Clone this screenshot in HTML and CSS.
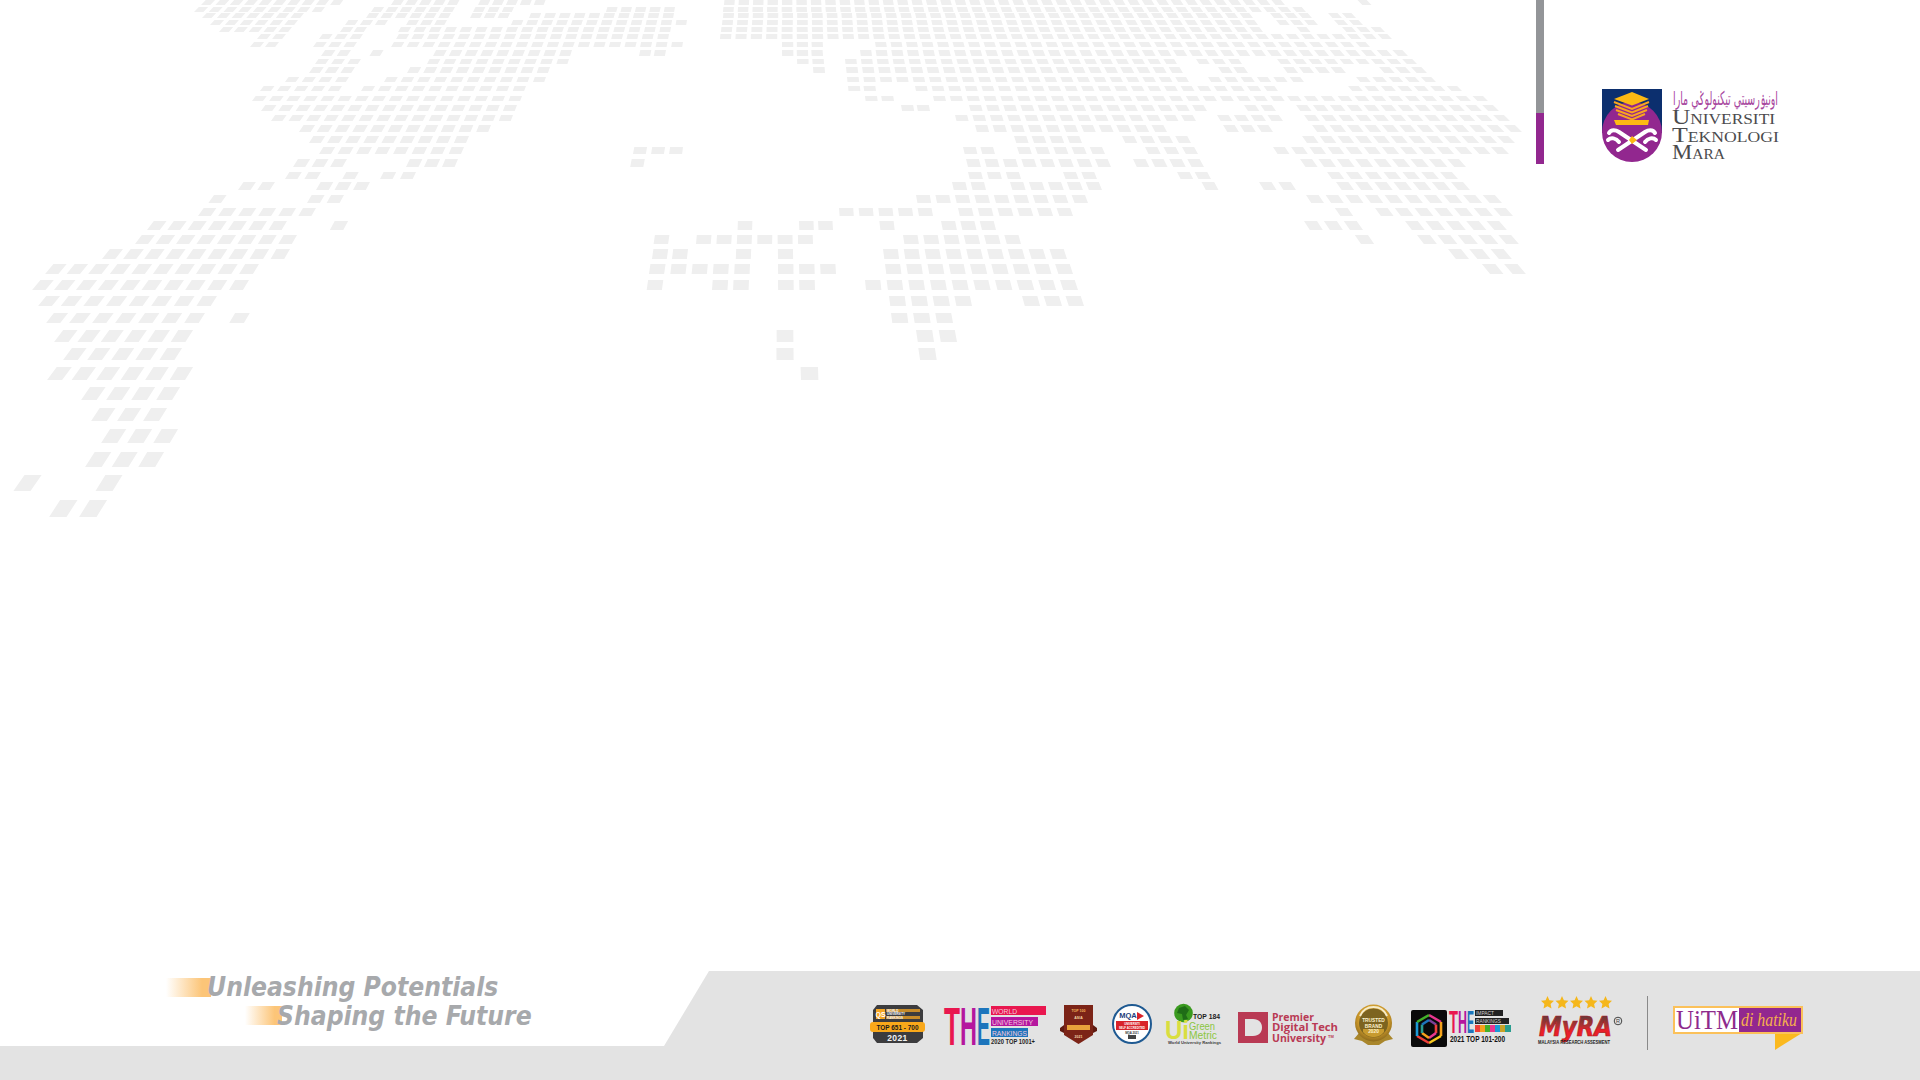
FILE: index.html
```html
<!DOCTYPE html>
<html lang="en">
<head>
<meta charset="utf-8">
<title>UiTM slide</title>
<link rel="stylesheet" href="styles.css">
</head>
<body>
<main class="slide">
  <svg class="map" viewBox="0 0 1920 1080" aria-hidden="true"><path id="map-dots" class="map-dots"/></svg>

  <header class="top">
    <div class="accent"><span class="accent-grey"></span><span class="accent-purple"></span></div>
    <svg class="uitm-logo" viewBox="0 0 180 76" role="img" aria-label="Universiti Teknologi Mara">
      <rect x="0" y="0" width="60" height="44" fill="#0c2f6e"/>
      <circle cx="30" cy="43" r="30" fill="#92278f"/>
      <path d="M30 3 47 10 30 16.500 12 10Z" fill="#fdb913"/>
      <path d="M12 13 30 20 47 13M13 17 30 23.500 46 17M14 21 30 27 45 21M16 25 30 30.500 43 25" fill="none" stroke="#f9a51f" stroke-width="2"/>
      <path d="M12 31H47L46 36H14Z" fill="#fdb913"/>
      <path d="M7 44C9 40 14 41 17 43L44 61M53 44C51 40 46 41 43 43L16 61M6 51C9 48 14 49 17 53M54 51C51 48 46 49 43 53" fill="none" stroke="#fff" stroke-width="4" stroke-linecap="round"/>
      <path d="M30 47 35 51 30 55 27 51Z" fill="#fdb913"/>
      <text class="jawi" x="71" y="16" textLength="105" lengthAdjust="spacingAndGlyphs">اونيۏرسيتي تيکنولوݢي مارا</text>
      <text class="logo-word" x="70" y="35" textLength="103" lengthAdjust="spacingAndGlyphs">Universiti</text>
      <text class="logo-word" x="70" y="52.500" textLength="107" lengthAdjust="spacingAndGlyphs">Teknologi</text>
      <text class="logo-word" x="70" y="70" textLength="53" lengthAdjust="spacingAndGlyphs">Mara</text>
    </svg>
  </header>

  <footer class="foot">
    <div class="tagline">
      <p class="tag tag-one"><span class="tag-bar tag-bar-one"></span><span class="tag-text">Unleashing Potentials</span></p>
      <p class="tag tag-two"><span class="tag-bar tag-bar-two"></span><span class="tag-text">Shaping the Future</span></p>
    </div>
    <div class="logos">
      <svg class="lg lg-qs" width="55" height="56" viewBox="0 0 55 56" role="img" aria-label="QS World University Rankings">
        <path d="M7 10H47L53 15V43L47 48H7L3 43V15Z" fill="#3c3c3e"/>
        <rect x="6" y="14" width="9" height="10" fill="#f5a623"/>
        <text class="t-qs-q" x="10.500" y="21.500">QS</text>
        <rect x="16" y="14" width="34" height="3" fill="#f5a623" opacity=".75"/>
        <rect x="16" y="21" width="34" height="3" fill="#f5a623" opacity=".75"/>
        <text class="t-qs-s" x="17" y="17">WORLD</text>
        <text class="t-qs-s" x="17" y="20.300">UNIVERSITY</text>
        <text class="t-qs-s" x="17" y="23.600">RANKINGS</text>
        <rect x="0" y="27" width="55" height="10" rx="3" fill="#f9a81a"/>
        <text class="t-qs-top" x="27.500" y="34.500" textLength="42" lengthAdjust="spacingAndGlyphs">TOP 651 - 700</text>
        <text class="t-qs-yr" x="27.500" y="46">2021</text>
      </svg>
      <svg class="lg lg-the" width="102" height="56" viewBox="0 0 102 56" role="img" aria-label="THE World University Rankings">
        <text class="t-the t-red" x="0" y="50" textLength="16" lengthAdjust="spacingAndGlyphs">T</text>
        <text class="t-the t-mag" x="16" y="50" textLength="17" lengthAdjust="spacingAndGlyphs">H</text>
        <text class="t-the t-blu" x="33" y="50" textLength="13" lengthAdjust="spacingAndGlyphs">E</text>
        <rect x="47" y="11" width="55" height="9" fill="#e9174f"/>
        <text class="t-the-s" x="48" y="18.500" textLength="25" lengthAdjust="spacingAndGlyphs">WORLD</text>
        <rect x="47" y="22" width="47" height="9" fill="#b5179e"/>
        <text class="t-the-s" x="48" y="29.500" textLength="41" lengthAdjust="spacingAndGlyphs">UNIVERSITY</text>
        <rect x="47" y="33" width="37" height="9" fill="#1c75bc"/>
        <text class="t-the-s" x="48" y="40.500" textLength="35" lengthAdjust="spacingAndGlyphs">RANKINGS</text>
        <text class="t-the-y" x="47" y="49" textLength="44" lengthAdjust="spacingAndGlyphs">2020 TOP 1001+</text>
      </svg>
      <svg class="lg lg-asia" width="37" height="56" viewBox="0 0 37 56" role="img" aria-label="Top 100 Asia">
        <path d="M4 10H33V40L18.500 49 4 40Z" fill="#7c2417"/>
        <path d="M0 33 4 30V38L0 36ZM37 33 33 30V38L37 36Z" fill="#5f1a10"/>
        <text class="t-asia t-asia-o" x="18.500" y="17">TOP 100</text>
        <text class="t-asia" x="18.500" y="24">ASIA</text>
        <rect x="7" y="30" width="23" height="5" fill="#e8a33b"/>
        <text class="t-asia" x="18.500" y="43">2021</text>
      </svg>
      <svg class="lg lg-moa" width="40" height="56" viewBox="0 0 40 56" role="img" aria-label="MQA self accreditation">
        <circle cx="20" cy="29" r="19" fill="#fff" stroke="#1f5a92" stroke-width="2"/>
        <text class="t-mqa" x="16" y="23">MQA</text>
        <path d="M25 17 32 21 25 25Z" fill="#d8232a"/>
        <rect x="4" y="26" width="32" height="9" fill="#d8232a"/>
        <text class="t-moa-s" x="20" y="30">UNIVERSITI</text>
        <text class="t-moa-s" x="20" y="33.500">SELF ACCREDITED</text>
        <text class="t-moa-d" x="20" y="39">MQA 2021</text>
        <rect x="16" y="40" width="8" height="4" fill="#444"/>
      </svg>
      <svg class="lg lg-green" width="55" height="56" viewBox="0 0 55 56" role="img" aria-label="UI GreenMetric top 184">
        <circle cx="17.500" cy="18" r="9.300" fill="#3a9a1f"/>
        <path d="M13 13 19 11 23 15 20 20 22 24 17 25 16 19 11 18Z" fill="#1f6d17"/>
        <text class="t-gr-top" x="27" y="24" textLength="27" lengthAdjust="spacingAndGlyphs">TOP 184</text>
        <text class="t-gr-ui" x="-1" y="44" textLength="24" lengthAdjust="spacingAndGlyphs">Ui</text>
        <text class="t-gr-g" x="23" y="34.500" textLength="26" lengthAdjust="spacingAndGlyphs">Green</text>
        <text class="t-gr-g" x="23" y="43.500" textLength="28" lengthAdjust="spacingAndGlyphs">Metric</text>
        <text class="t-gr-w" x="2" y="49" textLength="53" lengthAdjust="spacingAndGlyphs">World University Rankings</text>
      </svg>
      <svg class="lg lg-pdt" width="100" height="56" viewBox="0 0 100 56" role="img" aria-label="Premier Digital Tech University">
        <path d="M0 17H30V48H0ZM7 24V41H15C21 41 24 37 24 32.500 24 28 21 24 15 24Z" fill="#b93a54" fill-rule="evenodd"/>
        <text class="t-pdt" x="34" y="26" textLength="42" lengthAdjust="spacingAndGlyphs">Premier</text>
        <text class="t-pdt" x="34" y="36" textLength="66" lengthAdjust="spacingAndGlyphs">Digital Tech</text>
        <text class="t-pdt" x="34" y="46.500" textLength="54" lengthAdjust="spacingAndGlyphs">University</text>
        <text class="t-pdt-tm" x="90" y="42.500">TM</text>
      </svg>
      <svg class="lg lg-trust" width="39" height="56" viewBox="0 0 39 56" role="img" aria-label="Trusted Brand 2020">
        <defs><radialGradient id="gold" cx=".5" cy=".4" r=".6"><stop offset="0" stop-color="#f7d774"/><stop offset=".7" stop-color="#c9962a"/><stop offset="1" stop-color="#8c6a1c"/></radialGradient></defs>
        <path d="M5 38 0 44 8 46 14 50H25L31 46 39 44 34 38Z" fill="#a9862b"/>
        <circle cx="19.500" cy="28" r="18.500" fill="url(#gold)"/>
        <circle cx="19.500" cy="28" r="14.500" fill="#7d6420"/>
        <path d="M6 21C9 14 14 12 19.500 12 25 12 30 14 33 21" fill="none" stroke="#f6ecc9" stroke-width="2"/>
        <path d="M9 37C12 41 16 42 19.500 42 23 42 27 41 30 37V34H9Z" fill="#c79a2e"/>
        <text class="t-tr" x="19.500" y="27">TRUSTED</text>
        <text class="t-tr" x="19.500" y="32.500">BRAND</text>
        <text class="t-tr" x="19.500" y="38">2020</text>
      </svg>
      <svg class="lg lg-impact" width="104" height="56" viewBox="0 0 104 56" role="img" aria-label="THE Impact Rankings 2021 top 101-200">
        <rect x="0" y="15" width="36" height="37" rx="2" fill="#0a0a0a"/>
        <g fill="none" stroke-width="2.600">
          <path d="M18 20 30 27" stroke="#e9368f"/><path d="M30 27V41" stroke="#f5a11c"/><path d="M30 41 18 48" stroke="#f7c81e"/>
          <path d="M18 48 6 41" stroke="#ef3f3a"/><path d="M6 41V27" stroke="#1c9ad6"/><path d="M6 27 18 20" stroke="#43b02a"/>
          <path d="M18 25 25 29.500" stroke="#7d3f98"/><path d="M25 29.500V38" stroke="#ef3f3a"/><path d="M25 38 18 43" stroke="#e9368f"/>
          <path d="M18 43 11 38" stroke="#f5a11c"/><path d="M11 38V29.500" stroke="#2a9d8f"/><path d="M11 29.500 18 25" stroke="#1c75bc"/>
        </g>
        <text class="t-the-b t-red" x="38" y="38" textLength="9" lengthAdjust="spacingAndGlyphs">T</text>
        <text class="t-the-b t-mag" x="47" y="38" textLength="9" lengthAdjust="spacingAndGlyphs">H</text>
        <text class="t-the-b t-blu" x="56" y="38" textLength="7" lengthAdjust="spacingAndGlyphs">E</text>
        <rect x="64" y="15" width="28" height="6" fill="#222"/>
        <text class="t-imp" x="65" y="20" textLength="18" lengthAdjust="spacingAndGlyphs">IMPACT</text>
        <rect x="64" y="23" width="34" height="6" fill="#222"/>
        <text class="t-imp" x="65" y="28" textLength="25" lengthAdjust="spacingAndGlyphs">RANKINGS</text>
        <rect x="64" y="30" width="5" height="7" fill="#ef3f3a"/><rect x="69" y="30" width="5" height="7" fill="#f5a11c"/>
        <rect x="74" y="30" width="5" height="7" fill="#43b02a"/><rect x="79" y="30" width="5" height="7" fill="#e9368f"/>
        <rect x="84" y="30" width="5" height="7" fill="#1c9ad6"/><rect x="89" y="30" width="5" height="7" fill="#c9a227"/>
        <rect x="94" y="30" width="6" height="7" fill="#2a9d8f"/>
        <text class="t-imp-y" x="39" y="46.500" textLength="55" lengthAdjust="spacingAndGlyphs">2021 TOP 101-200</text>
      </svg>
      <svg class="lg lg-myra" width="85" height="56" viewBox="0 0 85 56" role="img" aria-label="MyRA Malaysia Research Assesment five stars">
        <defs>
          <path id="star" d="M6.500 0 8.400 4.300 13 4.800 9.600 7.900 10.500 12.500 6.500 10.200 2.500 12.500 3.400 7.900 0 4.800 4.600 4.300Z" fill="#f5b71b"/>
          <linearGradient id="myra-fill" x1="0" y1="0" x2="0" y2="1"><stop offset="0" stop-color="#4a3a3a"/><stop offset=".45" stop-color="#a33"/><stop offset=".6" stop-color="#e8202a"/><stop offset="1" stop-color="#f01c24"/></linearGradient>
        </defs>
        <use href="#star" x="3" y="1"/><use href="#star" x="17.500" y="1"/><use href="#star" x="32" y="1"/><use href="#star" x="46.500" y="1"/><use href="#star" x="61" y="1"/>
        <text class="t-myra" x="1" y="41" textLength="73" lengthAdjust="spacingAndGlyphs">MyRA</text>
        <circle cx="80" cy="26" r="3.800" fill="none" stroke="#444" stroke-width="1"/>
        <text class="t-reg" x="80" y="28">R</text>
        <text class="t-myra-s" x="0" y="49" textLength="72" lengthAdjust="spacingAndGlyphs">MALAYSIA RESEARCH ASSESMENT</text>
      </svg>
      <span class="sep"></span>
      <svg class="lg lg-hati" width="130" height="56" viewBox="0 0 130 56" role="img" aria-label="UiTM di hatiku">
        <path d="M102 38H129L102 55Z" fill="#fbb91f"/>
        <rect x="1" y="12" width="128" height="26" fill="#fff" stroke="#fbc15a" stroke-width="2"/>
        <rect x="66" y="13" width="62" height="24" fill="#92278f"/>
        <text class="t-hati-u" x="3" y="34" textLength="62" lengthAdjust="spacingAndGlyphs">UiTM</text>
        <text class="t-hati-d" x="68" y="31" textLength="56" lengthAdjust="spacingAndGlyphs">di hatiku</text>
      </svg>
    </div>
  </footer>
</main>
<script src="map.js"></script>
</body>
</html>
```

FILE: styles.css
```css
* { box-sizing: border-box; }
html, body { margin: 0; height: 100%; background: #fff; }
.slide {
  position: relative;
  width: 1920px;
  height: 1080px;
  overflow: hidden;
  display: flex;
  flex-direction: column;
  justify-content: space-between;
  background: #fff;
  font-family: "Liberation Sans", Arial, sans-serif;
}
.map { position: absolute; inset: 0; width: 1920px; height: 1080px; }
.map-dots { fill: #efefef; }

/* header */
.top {
  position: relative;
  display: flex;
  justify-content: flex-end;
  align-items: flex-start;
  gap: 58px;
  padding-right: 138px;
}
.accent { display: flex; flex-direction: column; width: 8px; }
.accent-grey { height: 113px; background: #939598; }
.accent-purple { height: 51px; background: #92278f; }
.uitm-logo { width: 180px; height: 76px; margin-top: 89px; overflow: visible; }
.jawi { font-family: "DejaVu Sans", sans-serif; font-size: 19px; fill: #a8489f; }
.logo-word {
  font-family: "Liberation Serif", serif;
  font-size: 20.5px;
  font-variant: small-caps;
  fill: #4b4b4d;
}

/* footer */
.foot {
  position: relative;
  display: flex;
  height: 109px;
  background: linear-gradient(#e3e3e3, #e3e3e3) left bottom / 100% 34px no-repeat;
}
.tagline { width: 664px; flex: none; padding-top: 2px; }
.tag { display: flex; align-items: center; height: 28.5px; margin: 0; }
.tag-one { padding-left: 166px; }
.tag-two { padding-left: 245px; }
.tag-bar { flex: none; height: 19px; background: linear-gradient(90deg, rgba(252, 197, 120, 0), #fcc578 80%); }
.tag-bar-one { width: 45px; margin-right: -4px; }
.tag-bar-two { width: 37px; margin-right: -5px; }
.tag-text {
  position: relative;
  font-family: "DejaVu Sans", sans-serif;
  font-stretch: condensed;
  font-style: italic;
  font-weight: 700;
  font-size: 26.2px;
  line-height: 28.5px;
  white-space: nowrap;
  color: #a7a9ac;
}
.logos {
  flex: 1;
  display: flex;
  align-items: flex-start;
  padding: 24px 0 0 206px;
  background: #e3e3e3;
  clip-path: polygon(45px 0, 100% 0, 100% 100%, 0 100%, 0 75px);
}
.lg { flex: none; display: block; overflow: visible; }
.lg-the { margin-left: 19px; }
.lg-asia { margin-left: 14px; }
.lg-moa { margin-left: 15px; }
.lg-green { margin-left: 14px; }
.lg-pdt { margin-left: 17px; }
.lg-trust { margin-left: 16px; }
.lg-impact { margin-left: 18px; }
.lg-myra { margin-left: 23px; }
.lg-hati { margin-left: 25px; }
.sep { flex: none; width: 1px; height: 54px; margin: 1px 0 0 24px; background: #8a8a8a; }

/* logo text */
.lg text { font-family: "Liberation Sans", Arial, sans-serif; }
.t-qs-q { font-size: 7px; font-weight: 700; fill: #fff; text-anchor: middle; }
.t-qs-s { font-size: 3px; font-weight: 700; fill: #fff; }
.t-qs-top { font-size: 7px; font-weight: 700; fill: #1a1a1a; text-anchor: middle; }
.t-qs-yr { font-size: 8.500px; font-weight: 700; fill: #f2f2f2; text-anchor: middle; letter-spacing: .4px; }
.lg text.t-the { font-family: "Liberation Sans Narrow", "Liberation Sans", sans-serif; font-size: 54px; font-weight: 700; }
.t-red { fill: #e9174f; }
.t-mag { fill: #b5179e; }
.t-blu { fill: #1c75bc; }
.t-the-s { font-size: 8px; fill: #f4c9de; }
.t-the-y { font-size: 7.800px; font-weight: 700; fill: #222; }
.t-asia { font-size: 3.500px; font-weight: 700; fill: #f4d9a8; text-anchor: middle; }
.t-asia-o { fill: #f5b95a; }
.t-mqa { font-size: 7.500px; font-weight: 700; fill: #23407c; text-anchor: middle; }
.t-moa-s { font-size: 2.800px; font-weight: 700; fill: #fff; text-anchor: middle; }
.t-moa-d { font-size: 2.800px; font-weight: 700; fill: #333; text-anchor: middle; }
.t-gr-top { font-size: 7.500px; font-weight: 700; fill: #1c1c1c; }
.t-gr-ui { font-size: 26px; font-weight: 700; fill: #d9de3f; }
.t-gr-g { font-size: 10.500px; fill: #8cc63f; }
.t-gr-w { font-size: 3.800px; font-weight: 700; fill: #3a3a3a; }
.lg text.t-pdt { font-family: "Open Sans", "Liberation Sans", sans-serif; font-size: 10.400px; font-weight: 700; fill: #b93a54; }
.t-pdt-tm { font-size: 4px; font-weight: 700; fill: #b93a54; }
.t-tr { font-size: 4.800px; font-weight: 700; fill: #fff4cf; text-anchor: middle; }
.lg text.t-the-b { font-family: "Liberation Sans Narrow", "Liberation Sans", sans-serif; font-size: 32px; font-weight: 700; }
.t-imp { font-size: 5.500px; fill: #cfcfcf; }
.t-imp-y { font-size: 9px; font-weight: 700; fill: #111; }
.lg text.t-myra { font-family: "DejaVu Sans", sans-serif; font-size: 26px; font-weight: 700; font-style: italic; fill: url(#myra-fill); stroke: #b01c24; stroke-width: .7px; }
.t-reg { font-size: 5.500px; fill: #444; text-anchor: middle; }
.t-myra-s { font-size: 4.800px; font-weight: 700; fill: #222; }
.lg text.t-hati-u { font-family: "Liberation Serif", serif; font-size: 27px; fill: #8e2a8c; }
.lg text.t-hati-d { font-family: "Liberation Serif", serif; font-size: 18px; font-style: italic; fill: #f6b04d; }
```

FILE: map.js
```js
// Dotted world map: each row is [top, bottom, pitch, [firstX, lastX, cells], ...]
var ROWS = [
[-1,5,14.5,[201,344,10],[391,460,5],[478,546,5],[724,1285,39],[1358,1370,1]],
[7,12,14.7,[194,325,9],[371,455,6],[473,514,3],[606,675,5],[723,1306,40]],
[13,18,14.9,[202,304,7],[366,451,6],[470,510,3],[529,674,10],[723,1253,36],[1270,1312,3],[1328,1356,2]],
[20,25,15,[210,298,6],[345,388,3],[406,447,3],[511,687,12],[722,1258,36],[1276,1318,3],[1334,1363,2]],
[27,32,15.2,[219,292,5],[340,367,2],[398,671,18],[721,1263,36],[1297,1310,1],[1342,1385,3]],
[34,39,15.4,[257,286,2],[319,363,3],[396,669,18],[720,1392,44]],
[42,47,15.6,[250,279,2],[313,357,3],[391,683,19],[782,823,3],[875,1370,32]],
[50,56,15.8,[321,351,2],[370,383,1],[433,572,9],[639,666,2],[782,823,3],[860,1408,35]],
[59,64,16,[315,361,3],[427,569,9],[797,824,2],[845,1177,21],[1196,1242,3],[1277,1417,9]],
[67,73,16.3,[309,355,3],[407,550,9],[813,825,1],[846,1183,21],[1218,1248,2],[1283,1346,4],[1379,1427,3]],
[77,82,16.4,[285,349,4],[384,546,10],[847,1189,21],[1208,1304,6],[1356,1436,5]],
[86,91,16.7,[260,342,5],[361,526,10],[848,876,2],[915,1278,22],[1348,1462,7]],
[96,101,17,[252,522,16],[865,894,2],[933,1488,33]],
[105,111,17.3,[261,517,15],[901,930,2],[969,1207,14],[1244,1276,2],[1296,1499,12]],
[115,121,17.5,[271,513,14],[955,1196,14],[1217,1283,4],[1304,1510,12]],
[125,132,17.7,[299,491,11],[975,1167,11],[1223,1273,3],[1312,1522,12]],
[136,143,18,[309,469,9],[1014,1082,4],[1122,1191,4],[1302,1515,12]],
[147,154,18.3,[319,464,8],[633,683,3],[963,995,2],[1017,1105,5],[1145,1198,3],[1273,1509,13]],
[159,167,18.7,[293,347,3],[406,458,3],[631,644,1],[966,1111,8],[1133,1204,4],[1300,1466,9]],
[172,179,19,[285,321,2],[342,359,1],[380,416,2],[968,1021,3],[1063,1097,2],[1177,1211,2],[1327,1458,7]],
[182,190,19.3,[238,275,2],[316,370,3],[952,986,2],[1010,1102,5],[1202,1218,1],[1259,1296,2],[1336,1470,7]],
[195,203,19.7,[208,227,1],[307,344,2],[916,1088,9],[1306,1502,10]],
[208,216,20,[198,316,6],[839,933,5],[958,1073,6],[1335,1353,1],[1375,1513,7]],
[221,230,20.3,[147,287,7],[330,348,1],[738,752,1],[799,833,2],[880,894,1],[941,996,3],[1304,1363,3],[1405,1507,5]],
[235,244,20.7,[135,297,8],[654,669,1],[696,813,6],[903,1021,6],[1355,1374,1],[1417,1519,5]],
[249,259,21,[102,290,9],[652,688,2],[736,751,1],[778,793,1],[883,1067,9],[1448,1512,3]],
[264,274,21.5,[45,259,10],[649,750,5],[778,836,3],[885,1073,9],[1482,1526,2]],
[280,290,21.7,[32,249,10],[647,663,1],[712,749,2],[778,815,2],[865,1078,10]],
[296,306,22.4,[38,217,8],[889,972,4],[1022,1084,3]],
[313,323,22.8,[46,205,7],[229,250,1],[891,953,3]],
[330,342,23.2,[54,193,6],[777,793,1],[916,957,2]],
[348,360,23.7,[63,182,5],[777,793,1],[919,936,1]],
[367,380,24.3,[47,193,6],[801,818,1]],
[387,400,25,[81,180,4]],
[408,421,25.3,[91,167,3]],
[429,443,26,[101,178,3]],
[452,467,26.7,[85,164,3]],
[475,491,27.5,[13,42,1],[95,123,1]],
[500,517,28,[49,107,2]]
];
var CX = 780, VY = -600;
function ratio(x) { return 0.72 - 0.1 * Math.min(1, Math.abs(x - CX) / 700); }
function skew(x, y, h) { return (x - CX) / (y - VY) * h; }
var d = "";
ROWS.forEach(function (row) {
  var y0 = row[0], y1 = row[1], pitch = row[2], h = y1 - y0, ym = (y0 + y1) / 2;
  row.slice(3).forEach(function (run) {
    var n = run[2];
    var wa = pitch * ratio(run[0]), wb = pitch * ratio(run[1]);
    var ca = run[0] + (wa + Math.abs(skew(run[0], ym, h))) / 2;
    var cb = run[1] - (wb + Math.abs(skew(run[1], ym, h))) / 2;
    if (n === 1) { ca = cb = (run[0] + run[1]) / 2; }
    for (var i = 0; i < n; i++) {
      var c = n === 1 ? ca : ca + (cb - ca) * i / (n - 1);
      var w = pitch * ratio(c), s = skew(c, ym, h);
      d += "M" + (c - s / 2 - w / 2).toFixed(1) + " " + y0 +
           "H" + (c - s / 2 + w / 2).toFixed(1) +
           "L" + (c + s / 2 + w / 2).toFixed(1) + " " + y1 +
           "H" + (c + s / 2 - w / 2).toFixed(1) + "Z";
    }
  });
});
document.getElementById("map-dots").setAttribute("d", d);
```
